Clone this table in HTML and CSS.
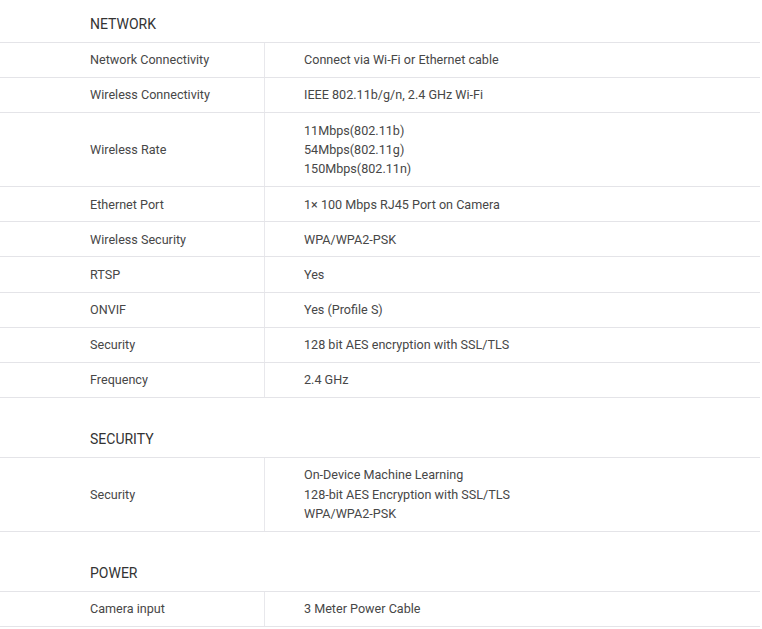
FILE: index.html
```html
<!DOCTYPE html>
<html>
<head>
<meta charset="utf-8">
<link rel="stylesheet" href="styles.css">
</head>
<body>
<div class="specs">
  <section class="group">
    <h2 class="group-title">NETWORK</h2>
    <div class="table">
      <div class="row"><div class="label">Network Connectivity</div><div class="value">Connect via Wi-Fi or Ethernet cable</div></div>
      <div class="row"><div class="label">Wireless Connectivity</div><div class="value">IEEE 802.11b/g/n, 2.4 GHz Wi-Fi</div></div>
      <div class="row"><div class="label">Wireless Rate</div><div class="value">11Mbps(802.11b)<br>54Mbps(802.11g)<br>150Mbps(802.11n)</div></div>
      <div class="row"><div class="label">Ethernet Port</div><div class="value">1× 100 Mbps RJ45 Port on Camera</div></div>
      <div class="row"><div class="label">Wireless Security</div><div class="value">WPA/WPA2-PSK</div></div>
      <div class="row"><div class="label">RTSP</div><div class="value">Yes</div></div>
      <div class="row"><div class="label">ONVIF</div><div class="value">Yes (Profile S)</div></div>
      <div class="row"><div class="label">Security</div><div class="value">128 bit AES encryption with SSL/TLS</div></div>
      <div class="row"><div class="label">Frequency</div><div class="value">2.4 GHz</div></div>
    </div>
  </section>
  <section class="group">
    <h2 class="group-title">SECURITY</h2>
    <div class="table">
      <div class="row"><div class="label">Security</div><div class="value">On-Device Machine Learning<br>128-bit AES Encryption with SSL/TLS<br>WPA/WPA2-PSK</div></div>
    </div>
  </section>
  <section class="group">
    <h2 class="group-title">POWER</h2>
    <div class="table">
      <div class="row"><div class="label">Camera input</div><div class="value">3 Meter Power Cable</div></div>
    </div>
  </section>
</div>
</body>
</html>
```
FILE: styles.css
```css
html, body {
  margin: 0;
  padding: 0;
  background: #fff;
}
body {
  font-family: Roboto, "Noto Sans", sans-serif;
  color: #474747;
}
.specs {
  width: 760px;
}
.group + .group {
  margin-top: 17px;
}
.group-title {
  margin: 0;
  height: 42px;
  box-sizing: border-box;
  padding: 14px 0 0 90px;
  font-size: 14px;
  line-height: 20px;
  font-weight: 400;
  color: #333;
}
.table {
  border-top: 1px solid #e4e4e8;
}
.row {
  display: grid;
  grid-template-columns: 265px 1fr;
  border-bottom: 1px solid #e4e4e8;
  font-size: 12.6px;
  line-height: 19.45px;
}
.label {
  display: flex;
  align-items: center;
  padding: 7.34px 0 7.34px 90px;
  border-right: 1px solid #e8e8ec;
}
.value {
  padding: 7.34px 0 7.34px 39px;
}
```
